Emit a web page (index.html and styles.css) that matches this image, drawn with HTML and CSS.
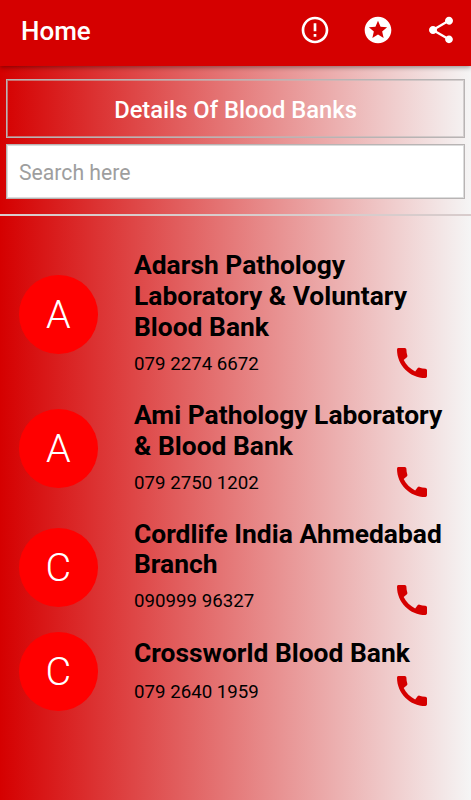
FILE: index.html
```
<!DOCTYPE html>
<html lang="en">
<head>
  <meta charset="UTF-8">
  <meta name="viewport" content="width=device-width, initial-scale=1.0">
  <title>Home</title>
  <link rel="stylesheet" href="styles.css">
</head>
<body>
  <svg width="0" height="0" class="sprite">
    <symbol id="call" viewBox="0 0 24 24">
      <path d="M20.01 15.38c-1.23 0-2.42-.2-3.53-.56-.35-.12-.74-.03-1.01.24l-1.57 1.97c-2.83-1.35-5.48-3.9-6.89-6.83l1.95-1.66c.27-.28.35-.67.24-1.02-.37-1.11-.56-2.3-.56-3.53 0-.54-.45-.99-.99-.99H4.19C3.65 3 3 3.24 3 3.99 3 13.28 10.73 21 20.01 21c.71 0 .99-.63.99-1.18v-3.45c0-.54-.45-.99-.99-.99z"/>
    </symbol>
  </svg>

  <header class="toolbar">
    <h1>Home</h1>
    <div class="actions">
      <svg viewBox="0 0 24 24"><path d="M11 15h2v2h-2zm0-8h2v6h-2zm.99-5C6.47 2 2 6.48 2 12s4.47 10 9.99 10C17.52 22 22 17.52 22 12S17.52 2 11.99 2zM12 20c-4.42 0-8-3.58-8-8s3.58-8 8-8 8 3.58 8 8-3.58 8-8 8z"/></svg>
      <svg viewBox="0 0 24 24"><path d="M11.99 2C6.47 2 2 6.48 2 12s4.47 10 9.99 10C17.52 22 22 17.52 22 12S17.52 2 11.99 2zm4.24 16L12 15.45 7.77 18l1.12-4.81-3.73-3.23 4.92-.42L12 5l1.92 4.53 4.92.42-3.73 3.23L16.23 18z"/></svg>
      <svg viewBox="0 0 24 24"><path d="M18 16.08c-.76 0-1.44.3-1.96.77L8.91 12.7c.05-.23.09-.46.09-.7s-.04-.47-.09-.7l7.05-4.11c.54.5 1.25.81 2.04.81 1.66 0 3-1.34 3-3s-1.34-3-3-3-3 1.34-3 3c0 .24.04.47.09.7L8.04 9.81C7.5 9.31 6.79 9 6 9c-1.66 0-3 1.34-3 3s1.34 3 3 3c.79 0 1.5-.31 2.04-.81l7.12 4.16c-.05.21-.08.43-.08.65 0 1.61 1.31 2.92 2.92 2.92s2.92-1.31 2.92-2.92-1.31-2.92-2.92-2.92z"/></svg>
    </div>
  </header>

  <section class="top">
    <h2>Details Of Blood Banks</h2>
    <input type="text" placeholder="Search here">
  </section>

  <ul class="banks">
    <li>
      <div class="avatar">A</div>
      <div class="info">
        <h3>Adarsh Pathology Laboratory &amp; Voluntary Blood Bank</h3>
        <div class="phone"><span>079 2274 6672</span><svg><use href="#call"/></svg></div>
      </div>
    </li>
    <li>
      <div class="avatar">A</div>
      <div class="info">
        <h3>Ami Pathology Laboratory &amp; Blood Bank</h3>
        <div class="phone"><span>079 2750 1202</span><svg><use href="#call"/></svg></div>
      </div>
    </li>
    <li>
      <div class="avatar">C</div>
      <div class="info">
        <h3>Cordlife India Ahmedabad Branch</h3>
        <div class="phone"><span>090999 96327</span><svg><use href="#call"/></svg></div>
      </div>
    </li>
    <li class="short">
      <div class="avatar">C</div>
      <div class="info">
        <h3>Crossworld Blood Bank</h3>
        <div class="phone"><span>079 2640 1959</span><svg><use href="#call"/></svg></div>
      </div>
    </li>
  </ul>
</body>
</html>
```

FILE: styles.css
```
* {
  box-sizing: border-box;
}

body {
  margin: 0;
  height: 100vh;
  overflow: hidden;
  background: linear-gradient(to right, #d50000, #e57b7b 50%, #f5f5f5);
  font-family: Roboto, sans-serif;
}

h1, h2, h3, ul {
  margin: 0;
  padding: 0;
}

.sprite {
  display: block;
}

.toolbar {
  display: flex;
  align-items: center;
  justify-content: space-between;
  height: 66px;
  padding: 0 14.5px 7px 21px;
  background-color: #d50000;
  color: #fff;
  box-shadow: 0 1px 5px rgba(0, 0, 0, 0.45);
}

.toolbar h1 {
  font-size: 26px;
  font-weight: 500;
  line-height: 30px;
  margin-top: 3px;
}

.actions {
  display: flex;
  gap: 31px;
}

.actions svg {
  width: 32px;
  height: 32px;
  fill: #fff;
}

.top {
  height: 150px;
  padding: 13px 6px 0;
  border-bottom: 2px solid #d8cccc;
}

.top h2 {
  height: 59px;
  border: 1px solid #b8b4b4;
  box-shadow: inset 0 0 0 1px rgba(190, 185, 185, 0.6);
  color: #fff;
  font-size: 23.75px;
  font-weight: 500;
  line-height: 60px;
  text-align: center;
}

.top input {
  display: block;
  width: 100%;
  height: 55px;
  margin-top: 6px;
  padding: 2px 12px 0;
  border: 1px solid #b8b4b4;
  box-shadow: inset 0 0 0 1px #dcdcdc;
  background-color: #fff;
  font-family: inherit;
  font-size: 21.2px;
}

.top input::placeholder {
  color: #9e9e9e;
}

.banks {
  padding-top: 34px;
  list-style: none;
}

.banks li {
  display: flex;
  align-items: center;
  margin-bottom: 17px;
  padding-left: 19px;
}

.avatar {
  width: 78.5px;
  height: 78.5px;
  margin: 0 36.5px 4px 0;
  border-radius: 50%;
  background-color: #f00;
  color: #fff;
  font-size: 39.5px;
  font-weight: 300;
  line-height: 79px;
  text-align: center;
}

.info {
  width: 320px;
}

.info h3 {
  font-size: 26.4px;
  font-weight: 700;
  line-height: 30.9px;
}

.phone {
  display: flex;
  align-items: center;
  justify-content: space-between;
  height: 40px;
  padding-right: 22.5px;
  font-size: 18.7px;
}

.phone span {
  padding-top: 2px;
}

.phone svg {
  width: 40px;
  height: 40px;
  fill: #d50000;
}

/* one-line names are shorter than the avatar */
.banks .short {
  align-items: flex-start;
  margin-top: 18px;
}

.short .avatar {
  margin-top: -6px;
}

.short .phone {
  margin-top: 2px;
}
```
